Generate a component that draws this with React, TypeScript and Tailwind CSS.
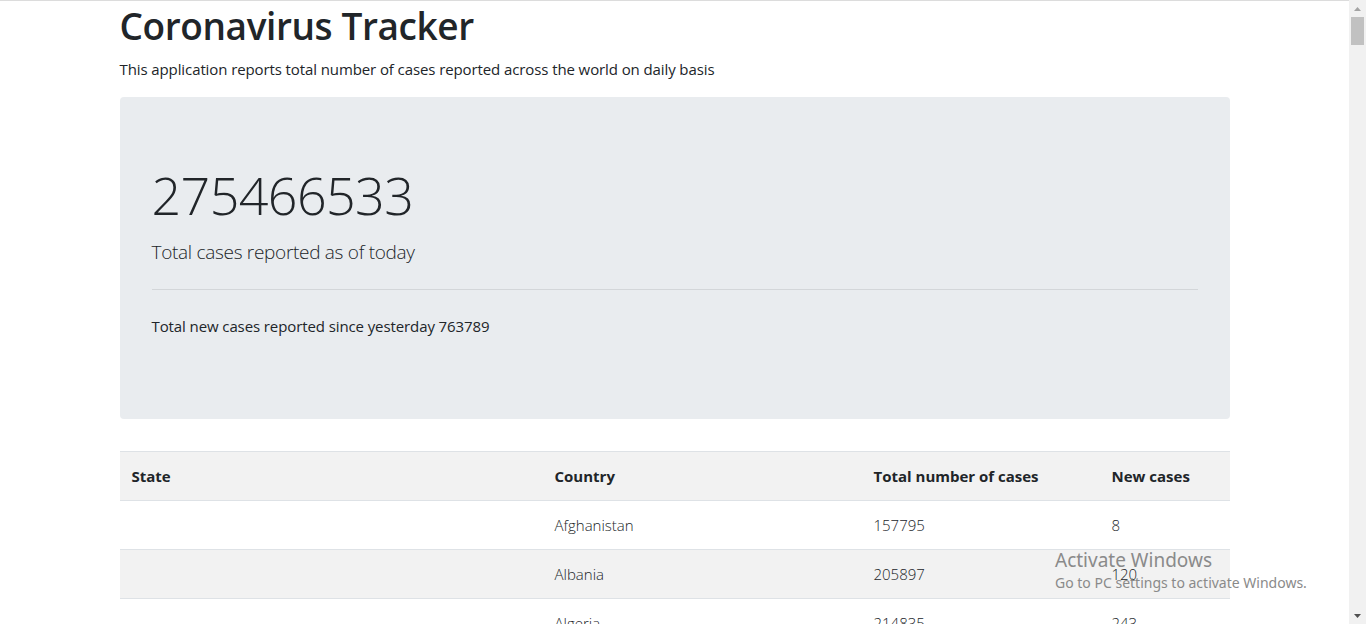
import React from "react";

const rows = [
  { state: "", country: "Afghanistan", total: "157795", newc: "8" },
  { state: "", country: "Albania", total: "205897", newc: "120" },
  { state: "", country: "Algeria", total: "214835", newc: "243" },
  { state: "", country: "Andorra", total: "23740", newc: "0" },
];

export default function App() {
  return (
    <div
      className="relative flex h-[624px] w-[1366px] overflow-hidden bg-white text-[#212529]"
      style={{ fontFamily: '"Open Sans", "Noto Sans", sans-serif' }}
    >
      <div className="flex-1 border-t border-[#dcdcdc]">
        <div className="mx-auto w-[1110px]">
          <h1 className="mt-[1px] text-[37px] font-semibold leading-[48px] tracking-[-0.4px]">
            Coronavirus Tracker
          </h1>
          <p className="mt-[7px] text-[15px] leading-[24px] tracking-[-0.1px]">
            This application reports total number of cases reported across the world on daily basis
          </p>
          <div className="mt-[16px] h-[322px] rounded-[4px] bg-[#e9ecef] px-[32px] pt-[64px]">
            <div className="text-[52px] font-light leading-[67px] tracking-[-0.6px]">275466533</div>
            <p className="mt-[9px] text-[19px] font-light leading-[30px] tracking-[-0.3px]">
              Total cases reported as of today
            </p>
            <hr className="mt-[22px] border-t border-[#d3d6d9]" />
            <p className="mt-[24px] text-[15px] leading-[24px] tracking-[-0.1px]">
              Total new cases reported since yesterday 763789
            </p>
          </div>
          <table className="mt-[32px] w-[1110px] border-collapse text-[15px]">
            <thead>
              <tr className="bg-[#f2f2f2]">
                <th className="w-[423px] border-t border-b border-[#dee2e6] px-[12px] py-[12px] text-left font-bold leading-[24px]">State</th>
                <th className="w-[319px] border-t border-b border-[#dee2e6] px-[12px] py-[12px] text-left font-bold leading-[24px]">Country</th>
                <th className="w-[238px] border-t border-b border-[#dee2e6] px-[12px] py-[12px] text-left font-bold leading-[24px]">Total number of cases</th>
                <th className="border-t border-b border-[#dee2e6] px-[12px] py-[12px] text-left font-bold leading-[24px]">New cases</th>
              </tr>
            </thead>
            <tbody>
              {rows.map((r, i) => (
                <tr key={i} className={i % 2 === 1 ? "bg-[#f2f2f2]" : "bg-white"}>
                  <td className="border-b border-[#dee2e6] px-[12px] py-[12px] leading-[24px]">{r.state}</td>
                  <td className="border-b border-[#dee2e6] px-[12px] py-[12px] font-light leading-[24px]">{r.country}</td>
                  <td className="border-b border-[#dee2e6] px-[12px] py-[12px] font-light leading-[24px]">{r.total}</td>
                  <td className="border-b border-[#dee2e6] px-[12px] py-[12px] font-light leading-[24px]">{r.newc}</td>
                </tr>
              ))}
            </tbody>
          </table>
        </div>
      </div>
      {/* scrollbar */}
      <div className="flex w-[17px] flex-col bg-[#f1f1f1]">
        <div className="flex h-[17px] items-center justify-center">
          <svg width="7" height="4" viewBox="0 0 7 4"><path d="M0 4 L3.5 0 L7 4 Z" fill="#a3a3a3" /></svg>
        </div>
        <div className="mx-[2px] h-[28px] bg-[#c1c1c1]" />
        <div className="flex-1" />
        <div className="flex h-[17px] items-center justify-center">
          <svg width="7" height="4" viewBox="0 0 7 4"><path d="M0 0 L3.5 4 L7 0 Z" fill="#505050" /></svg>
        </div>
      </div>
      {/* watermark */}
      <div className="pointer-events-none absolute left-[1055px] top-[548px] text-[#8a8a8a]" style={{ fontFamily: '"Noto Sans", sans-serif' }}>
        <div className="text-[19px] leading-[24px]">Activate Windows</div>
        <div className="mt-[1px] text-[14px] leading-[20px]">Go to PC settings to activate Windows.</div>
      </div>
    </div>
  );
}
